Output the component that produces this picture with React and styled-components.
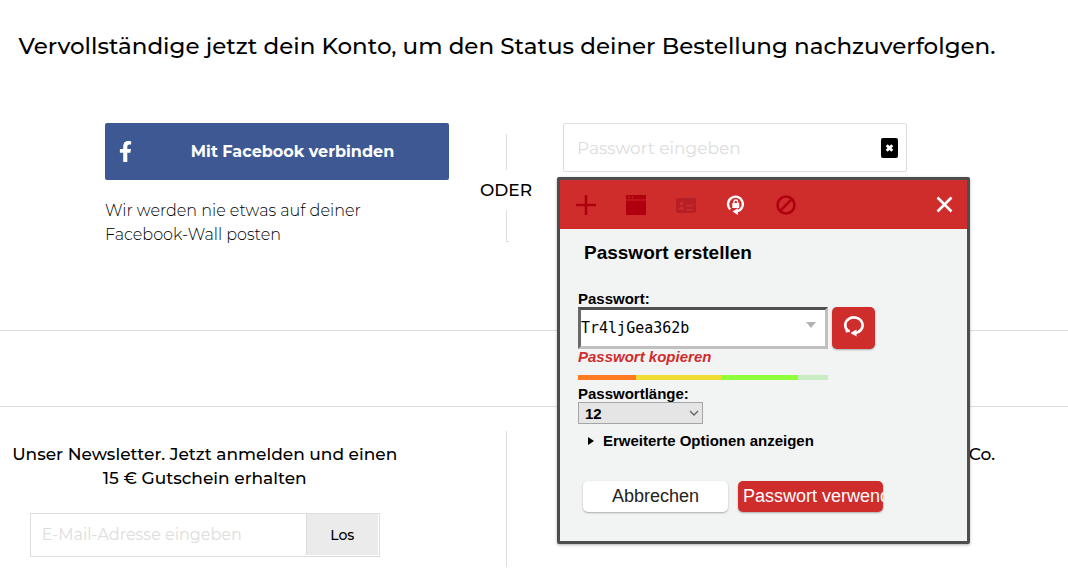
import React, { useState } from "react";
import styled, { createGlobalStyle } from "styled-components";
import { FaFacebookF } from "react-icons/fa";

const GlobalStyle = createGlobalStyle`
  *, *::before, *::after {
    box-sizing: border-box;
  }
  body {
    margin: 0;
    background: #fff;
    color: #000;
    font-family: Montserrat, Inter, sans-serif;
  }
  button, input, select {
    font-family: inherit;
    margin: 0;
  }
`;

const Page = styled.div`
  padding-top: 32px;
`;

const Title = styled.h1`
  margin: 0 0 63px;
  padding: 0 54px 0 0;
  font-size: 23px;
  font-weight: 500;
  line-height: 28px;
  text-align: center;
  white-space: nowrap;
`;

const Account = styled.section`
  display: flex;
  justify-content: center;
  align-items: flex-start;
  gap: 31px;
  padding: 0 56px 83px 0;
  border-bottom: 1px solid #ddd;
`;

const Column = styled.div`
  position: relative;
  width: 344px;
`;

const FacebookButton = styled.button`
  display: flex;
  align-items: center;
  width: 100%;
  height: 57px;
  padding: 0 0 0 10px;
  border: 0;
  border-radius: 2px;
  background: #3e5893;
  color: #fff;
  font-size: 16px;
  font-weight: 700;
  span {
    flex: 1;
  }
`;

const Note = styled.p`
  margin: 19px 0 0;
  font-size: 16px;
  font-weight: 300;
  line-height: 24px;
`;

const Or = styled.div`
  display: flex;
  flex-direction: column;
  align-items: center;
  gap: 8px;
  width: 52px;
  padding-top: 11px;
  font-size: 17px;
  font-weight: 500;
  line-height: 24px;
`;

const Line = styled.span`
  width: 3px;
  height: ${(p) => p.$height}px;
  margin-left: 2px;
  border-left: 1px solid #ddd;
  border-bottom: ${(p) => (p.$foot ? "1px solid #ddd" : "0")};
`;

const Field = styled.label`
  display: flex;
  align-items: center;
  height: 49px;
  padding: 0 8px 0 13px;
  border: 1px solid #ddd;
  border-radius: 2px;
`;

const FieldInput = styled.input`
  flex: 1;
  min-width: 0;
  padding: 0;
  border: 0;
  outline: 0;
  background: transparent;
  font-size: ${(p) => p.$size}px;
  font-weight: 400;
  &::placeholder {
    color: #ddd;
    opacity: 1;
    font-weight: ${(p) => p.$weight};
  }
`;

const Popup = styled.div`
  position: absolute;
  top: 54px;
  left: -6px;
  z-index: 2;
  width: 413px;
  border: 3px solid #4d4d4d;
  border-radius: 2px;
  background: #f2f4f4;
  box-shadow: 0 1px 3px rgba(0, 0, 0, 0.3);
  font-family: Arial, "Liberation Sans", sans-serif;
`;

const Toolbar = styled.div`
  display: flex;
  align-items: center;
  gap: 30px;
  height: 49px;
  padding: 0 14px 0 16px;
  background: #cf2c2c;
`;

const IconButton = styled.button`
  display: flex;
  padding: 0;
  border: 0;
  background: none;
  color: ${(p) => (p.$active ? "#fff" : "#b0000f")};
  &:last-child {
    margin-left: auto;
  }
`;

const PopupBody = styled.div`
  display: flex;
  flex-direction: column;
  align-items: flex-start;
  padding: 12px 18px 29px;
  font-size: 15px;
  font-weight: 700;
  line-height: 16px;
`;

const PopupTitle = styled.h2`
  margin: 0 0 26px 6px;
  font-size: 19px;
  line-height: 24px;
`;

const PasswordRow = styled.div`
  display: flex;
  gap: 4px;
`;

const Combo = styled.div`
  display: flex;
  align-items: stretch;
  width: 250px;
  height: 42px;
  border: 3px solid;
  border-color: #4f4f4f #c0c0c0 #c0c0c0 #6a6a6a;
  background: #fff;
`;

const ComboInput = styled.input`
  flex: 1;
  min-width: 0;
  padding: 0;
  border: 0;
  outline: 0;
  background: transparent;
  font-family: "DejaVu Sans Mono", monospace;
  font-size: 15px;
`;

const ComboArrow = styled.button`
  display: flex;
  justify-content: center;
  width: 28px;
  padding: 12px 0 0;
  border: 0;
  background: none;
`;

const Refresh = styled.button`
  display: flex;
  align-items: center;
  justify-content: center;
  width: 43px;
  height: 42px;
  padding: 0 0 4px;
  border: 0;
  border-radius: 5px;
  background: #cf2c2c;
  box-shadow: 0 1px 2px rgba(0, 0, 0, 0.3);
`;

const CopyLink = styled.a`
  color: #cf2c2c;
  font-style: italic;
  text-decoration: none;
`;

const Strength = styled.div`
  display: flex;
  width: 250px;
  height: 5px;
  margin: 10px 0 6px;
`;

const Segment = styled.span`
  flex: ${(p) => p.$share};
  background: ${(p) => p.$color};
`;

const SelectBox = styled.div`
  position: relative;
  width: 125px;
  svg {
    position: absolute;
    top: 8px;
    right: 4px;
    pointer-events: none;
  }
`;

const LengthSelect = styled.select`
  display: block;
  width: 100%;
  height: 22px;
  padding: 0 6px;
  appearance: none;
  border: 1px solid #a5a5a8;
  border-radius: 0;
  background: #e5e5e5;
  color: #000;
  font-size: 15px;
  font-weight: 700;
`;

const Advanced = styled.button`
  display: flex;
  align-items: center;
  gap: 9px;
  margin: 9px 0 32px 10px;
  padding: 0;
  border: 0;
  background: none;
  color: #000;
  font-size: 15px;
  font-weight: 700;
  line-height: 16px;
`;

const Actions = styled.div`
  display: flex;
  gap: 10px;
  margin-left: 5px;
`;

const ActionButton = styled.button`
  width: 145px;
  height: 31px;
  padding: 0 5px;
  overflow: hidden;
  border: 0;
  border-radius: 5px;
  background: ${(p) => (p.$primary ? "#cf2c2c" : "#fff")};
  color: ${(p) => (p.$primary ? "#fff" : "#222")};
  box-shadow: 0 1px 2px rgba(0, 0, 0, 0.3);
  font-size: 18px;
  text-align: ${(p) => (p.$primary ? "left" : "center")};
  white-space: nowrap;
`;

const Footer = styled.footer`
  display: grid;
  grid-template-columns: minmax(0, 1fr) 1px minmax(0, 1fr);
  margin-top: 75px;
  padding: 24px 56px 14px 0;
  border-top: 1px solid #ddd;
`;

const Newsletter = styled.div`
  display: flex;
  flex-direction: column;
  align-items: center;
  padding: 11px 96px 10px 0;
`;

const FooterTitle = styled.h3`
  margin: 0;
  font-size: 17px;
  font-weight: 500;
  line-height: 24px;
  text-align: center;
  white-space: nowrap;
`;

const Social = styled.div`
  display: flex;
  justify-content: flex-end;
  padding: 11px 17px 0 0;
`;

const Separator = styled.div`
  background: #ddd;
`;

const NewsletterForm = styled.form`
  display: flex;
  width: 350px;
  height: 44px;
  margin-top: 23px;
  padding: 0 1px 1px 11px;
  border: 1px solid #ddd;
`;

const SubmitButton = styled.button`
  width: 72px;
  border: 0;
  border-left: 1px solid #ddd;
  background: #ebebeb;
  color: #000;
  font-size: 14px;
  font-weight: 500;
`;

const segments = [
  { share: 58, color: "#ff7b22" },
  { share: 85, color: "#f0dc33" },
  { share: 77, color: "#8fff3c" },
  { share: 30, color: "#c9ecc4" },
];

const PlusIcon = () => (
  <svg width="20" height="20" viewBox="0 0 20 20" fill="currentColor">
    <path d="M8.7 0h2.6v8.7H20v2.6h-8.7V20H8.7v-8.7H0V8.7h8.7z" />
  </svg>
);

const WindowIcon = () => (
  <svg width="20" height="20" viewBox="0 0 20 20" fill="currentColor">
    <path d="M0 0h20v4H0zM0 6h20v14H0z" />
    <path d="M0 4h20v2H0z" fill="#bd1419" />
    <path d="M2 1.5h2l-1 2zM5.500 1.500h2l-1 2z" fill="#cf2c2c" />
  </svg>
);

const CardIcon = () => (
  <svg width="20" height="20" viewBox="0 0 20 20">
    <rect y="3" width="20" height="15" rx="2" fill="#b71f26" />
    <g fill="#cf2c2c">
      <circle cx="5.500" cy="8.500" r="1.800" />
      <path d="M3 15c0-2 1.500-2.500 1.800-3.500h1.400C6.500 12.500 8 13 8 15z" />
      <path d="M10 10h7v1.200h-7zM10 14h7v1.200h-7z" />
    </g>
  </svg>
);

const GenerateIcon = () => (
  <svg width="20" height="20" viewBox="0 0 20 20" fill="none" stroke="currentColor">
    <path d="M4.200 14.300A7.400 7.400 0 1 1 11 16.300" strokeWidth="2.400" />
    <path d="M11.800 13.200v6.800L6.500 16.600z" fill="currentColor" stroke="none" />
    <rect x="6.300" y="8" width="7" height="5" fill="currentColor" stroke="none" />
    <path d="M8 8.500V6.800a1.800 1.800 0 0 1 3.600 0v1.700" strokeWidth="1.300" />
  </svg>
);

const BlockIcon = () => (
  <svg width="20" height="20" viewBox="0 0 20 20" fill="none" stroke="currentColor" strokeWidth="2.600">
    <circle cx="10" cy="10" r="8.500" />
    <path d="M4.200 15.800L15.800 4.200" />
  </svg>
);

const CloseIcon = () => (
  <svg width="17" height="17" viewBox="0 0 17 17" stroke="currentColor" strokeWidth="2.600">
    <path d="M1.500 1.500l14 14M15.500 1.500l-14 14" />
  </svg>
);

const RefreshIcon = () => (
  <svg width="22" height="22" viewBox="0 0 22 22" fill="none">
    <path d="M4.800 15.800A8.700 7.800 0 1 1 12 18" stroke="#fff" strokeWidth="2.600" />
    <path d="M13.500 14.500v7L7.500 18z" fill="#fff" />
    <path d="M2.600 16.400l4.200-.600" stroke="#fff" strokeWidth="2.400" />
  </svg>
);

const ManagerIcon = () => (
  <svg width="17" height="20" viewBox="0 0 17 20">
    <rect width="17" height="20" rx="2" fill="#000" />
    <path d="M5.700 7.200l5.600 5.600M11.300 7.200l-5.600 5.600" stroke="#fff" strokeWidth="2.800" />
  </svg>
);

const tools = [
  { label: "Hinzufügen", Icon: PlusIcon },
  { label: "Formular", Icon: WindowIcon },
  { label: "Identität", Icon: CardIcon },
  { label: "Passwort erstellen", Icon: GenerateIcon, active: true },
  { label: "Blockieren", Icon: BlockIcon },
];

const PasswordPopup = () => {
  const [password, setPassword] = useState("Tr4ljGea362b");
  const [length, setLength] = useState("12");
  return (
    <Popup role="dialog" aria-labelledby="popup-title">
      <Toolbar>
        {tools.map(({ label, Icon, active }) => (
          <IconButton key={label} type="button" aria-label={label} $active={active}>
            <Icon />
          </IconButton>
        ))}
        <IconButton type="button" aria-label="Schließen" $active>
          <CloseIcon />
        </IconButton>
      </Toolbar>
      <PopupBody>
        <PopupTitle id="popup-title">Passwort erstellen</PopupTitle>
        <label htmlFor="generated">Passwort:</label>
        <PasswordRow>
          <Combo>
            <ComboInput
              id="generated"
              value={password}
              onChange={(e) => setPassword(e.target.value)}
            />
            <ComboArrow type="button" aria-label="Verlauf">
              <svg width="10" height="6" viewBox="0 0 10 6">
                <path d="M0 0h10L5 6z" fill="#b3b3b3" />
              </svg>
            </ComboArrow>
          </Combo>
          <Refresh type="button" aria-label="Neu erstellen">
            <RefreshIcon />
          </Refresh>
        </PasswordRow>
        <CopyLink href="#copy">Passwort kopieren</CopyLink>
        <Strength>
          {segments.map((s) => (
            <Segment key={s.color} $share={s.share} $color={s.color} />
          ))}
        </Strength>
        <label htmlFor="length">Passwortlänge:</label>
        <SelectBox>
          <LengthSelect
            id="length"
            value={length}
            onChange={(e) => setLength(e.target.value)}
          >
            <option>12</option>
          </LengthSelect>
          <svg width="10" height="7" viewBox="0 0 10 7" fill="none">
            <path d="M1 1l4 4 4-4" stroke="#666" strokeWidth="1.400" />
          </svg>
        </SelectBox>
        <Advanced type="button">
          <svg width="6" height="8" viewBox="0 0 6 8">
            <path d="M0 0l6 4-6 4z" />
          </svg>
          Erweiterte Optionen anzeigen
        </Advanced>
        <Actions>
          <ActionButton type="button">Abbrechen</ActionButton>
          <ActionButton type="button" $primary>
            Passwort verwenden
          </ActionButton>
        </Actions>
      </PopupBody>
    </Popup>
  );
};

const App = () => {
  return (
    <>
      <GlobalStyle />
      <Page>
        <Title>
          Vervollständige jetzt dein Konto, um den Status deiner Bestellung
          nachzuverfolgen.
        </Title>
        <Account>
          <Column>
            <FacebookButton type="button">
              <FaFacebookF size={21} />
              <span>Mit Facebook verbinden</span>
            </FacebookButton>
            <Note>
              Wir werden nie etwas auf deiner
              <br />
              Facebook-Wall posten
            </Note>
          </Column>
          <Or>
            <Line $height={36} />
            ODER
            <Line $height={32} $foot />
          </Or>
          <Column>
            <Field>
              <FieldInput
                type="password"
                aria-label="Passwort eingeben"
                placeholder="Passwort eingeben"
                $size={17}
                $weight={400}
              />
              <ManagerIcon />
            </Field>
            <PasswordPopup />
          </Column>
        </Account>
        <Footer>
          <Newsletter>
            <FooterTitle>
              Unser Newsletter. Jetzt anmelden und einen
              <br />
              15 € Gutschein erhalten
            </FooterTitle>
            <NewsletterForm onSubmit={(e) => e.preventDefault()}>
              <FieldInput
                type="email"
                aria-label="E-Mail-Adresse eingeben"
                placeholder="E-Mail-Adresse eingeben"
                $size={16}
                $weight={400}
              />
              <SubmitButton type="submit">Los</SubmitButton>
            </NewsletterForm>
          </Newsletter>
          <Separator />
          <Social>
            <FooterTitle>Co.</FooterTitle>
          </Social>
        </Footer>
      </Page>
    </>
  );
};

export default App;
